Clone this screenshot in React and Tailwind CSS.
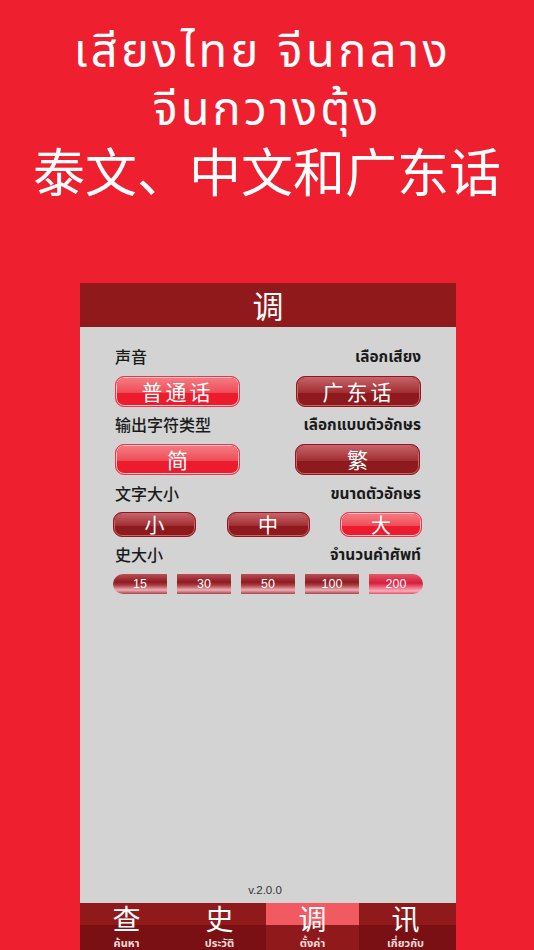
import React from 'react';

// Glossy pill button, red when selected and dark when not
const GlossButton = ({ label, active, className, textClass }) => (
  <div
    className={`relative flex items-center justify-center rounded-[9px] border ${
      active
        ? 'border-[#e8384a] bg-[#ec1c2e] shadow-[inset_0_0_0_1px_#f9c4c8]'
        : 'border-[#8f1a1e] bg-[#8f1a1e] shadow-[inset_0_0_0_1px_#c9646a]'
    } ${className}`}
  >
    <div
      className={`absolute inset-x-px top-px h-1/2 rounded-t-[7px] ${
        active
          ? 'bg-gradient-to-b from-[#f47a82] to-[#ee4a56]'
          : 'bg-gradient-to-b from-[#c46068] to-[#a02c30]'
      }`}
    />
    <span className={`relative font-['Noto_Sans_CJK_SC',sans-serif] leading-none text-white ${textClass}`}>
      {label}
    </span>
  </div>
);

const SettingLabel = ({ zh, th, className }) => (
  <div className={`flex items-center justify-between px-[35px] ${className}`}>
    <span className="mb-[2px] font-['Noto_Sans_CJK_SC',sans-serif] text-[16px] font-medium leading-[18px] text-[#1a1a1a]">{zh}</span>
    <span className="font-['Noto_Sans','Noto_Sans_Thai','DejaVu_Sans',sans-serif] text-[15.4px] font-bold leading-5 text-[#1a1a1a]">{th}</span>
  </div>
);

const segments = [
  { label: '15', shape: 'rounded-l-[10px]' },
  { label: '30', shape: '' },
  { label: '50', shape: '' },
  { label: '100', shape: '' },
  { label: '200', shape: 'rounded-r-[10px]', active: true },
];

const tabs = [
  { zh: '查', th: 'ค้นหา' },
  { zh: '史', th: 'ประวัติ' },
  { zh: '调', th: 'ตั้งค่า', active: true },
  { zh: '讯', th: 'เกี่ยวกับ', last: true },
];

const App = () => {
  return (
    <div className="flex h-[950px] w-[534px] flex-col overflow-hidden bg-[#ee1f2e]">
      <div className="flex h-[283px] shrink-0 flex-col items-center pt-[20px] text-white">
        <div className="pr-[9px] font-['Noto_Sans','Noto_Sans_Thai','DejaVu_Sans',sans-serif] text-[47px] leading-[58px] tracking-[3.4px]">เสียงไทย จีนกลาง</div>
        <div className="font-['Noto_Sans','Noto_Sans_Thai','DejaVu_Sans',sans-serif] text-[47px] leading-[58px] tracking-[3px]">จีนกวางตุ้ง</div>
        <div className="mt-[4px] font-['Noto_Sans_CJK_SC',sans-serif] text-[52px] leading-[60px]">泰文、中文和广东话</div>
      </div>

      <div className="ml-[80px] flex min-h-0 w-[376px] flex-1 flex-col bg-[#d3d3d3]">
        <div className="flex h-[44px] shrink-0 items-center justify-center bg-[#8f191b] font-['Noto_Sans_CJK_SC',sans-serif] text-[31px] text-white">
          调
        </div>

        <SettingLabel zh="声音" th="เลือกเสียง" className="mt-[20px]" />
        <div className="mt-[9px] flex justify-between px-[35px]">
          <GlossButton label="普通话" active className="h-[31px] w-[125px]" textClass="text-[21px] tracking-[3px]" />
          <GlossButton label="广东话" className="h-[31px] w-[125px]" textClass="text-[21px] tracking-[3px]" />
        </div>

        <SettingLabel zh="输出字符类型" th="เลือกแบบตัวอักษร" className="mt-[8px]" />
        <div className="mt-[9px] flex justify-between pl-[35px] pr-[36px]">
          <GlossButton label="简" active className="h-[31px] w-[125px]" textClass="text-[21px]" />
          <GlossButton label="繁" className="h-[31px] w-[125px]" textClass="text-[21px]" />
        </div>

        <SettingLabel zh="文字大小" th="ขนาดตัวอักษร" className="mt-[9px]" />
        <div className="mt-[8px] flex justify-between pl-[33px] pr-[34px]">
          <GlossButton label="小" className="h-[25px] w-[83px]" textClass="text-[20px]" />
          <GlossButton label="中" className="h-[25px] w-[83px]" textClass="text-[20px]" />
          <GlossButton label="大" active className="h-[25px] w-[82px]" textClass="text-[20px]" />
        </div>

        <SettingLabel zh="史大小" th="จำนวนคำศัพท์" className="mt-[8px]" />
        <div className="mt-[9px] flex justify-between px-[33px]">
          {segments.map((s) => (
            <div
              key={s.label}
              className={`flex h-[20px] w-[54px] items-center justify-center font-['Liberation_Sans',sans-serif] text-[12.5px] leading-none text-white ${s.shape} ${
                s.active
                  ? 'bg-[linear-gradient(#e05a6a,#d81c3c_45%,#e85068_60%,#f8b0bc_85%,#e05060)]'
                  : 'bg-[linear-gradient(#b85058,#8f1a1e_40%,#a83840_55%,#ecb0b4_80%,#a84048)]'
              }`}
            >
              {s.label}
            </div>
          ))}
        </div>

        <div className="mt-auto pb-[5px] pr-[6px] text-center font-['Liberation_Sans',sans-serif] text-[11.5px] leading-4 text-[#333333]">
          v.2.0.0
        </div>

        <div className="grid h-[47px] shrink-0 grid-cols-[93px_93px_93px_97px]">
          {tabs.map((tab) => (
            <div key={tab.zh} className="relative flex flex-col">
              <div className={`h-[22px] ${tab.active ? 'bg-[#f05a60]' : 'bg-[#8f191b]'}`} />
              <div className={`flex-1 ${tab.active ? 'bg-[#8f191b]' : 'bg-[#7a1013]'}`} />
              <div className={`absolute inset-0 flex flex-col items-center ${tab.last ? 'pr-[4px]' : ''}`}>
                <span className="font-['Noto_Sans_CJK_SC',sans-serif] text-[28px] leading-[31px] text-white">{tab.zh}</span>
                <span className="mt-px font-['Noto_Sans','Noto_Sans_Thai','DejaVu_Sans',sans-serif] text-[11px] font-bold leading-[15px] text-[#f3dcdc]">{tab.th}</span>
              </div>
            </div>
          ))}
        </div>
      </div>
    </div>
  );
};

export default App;
